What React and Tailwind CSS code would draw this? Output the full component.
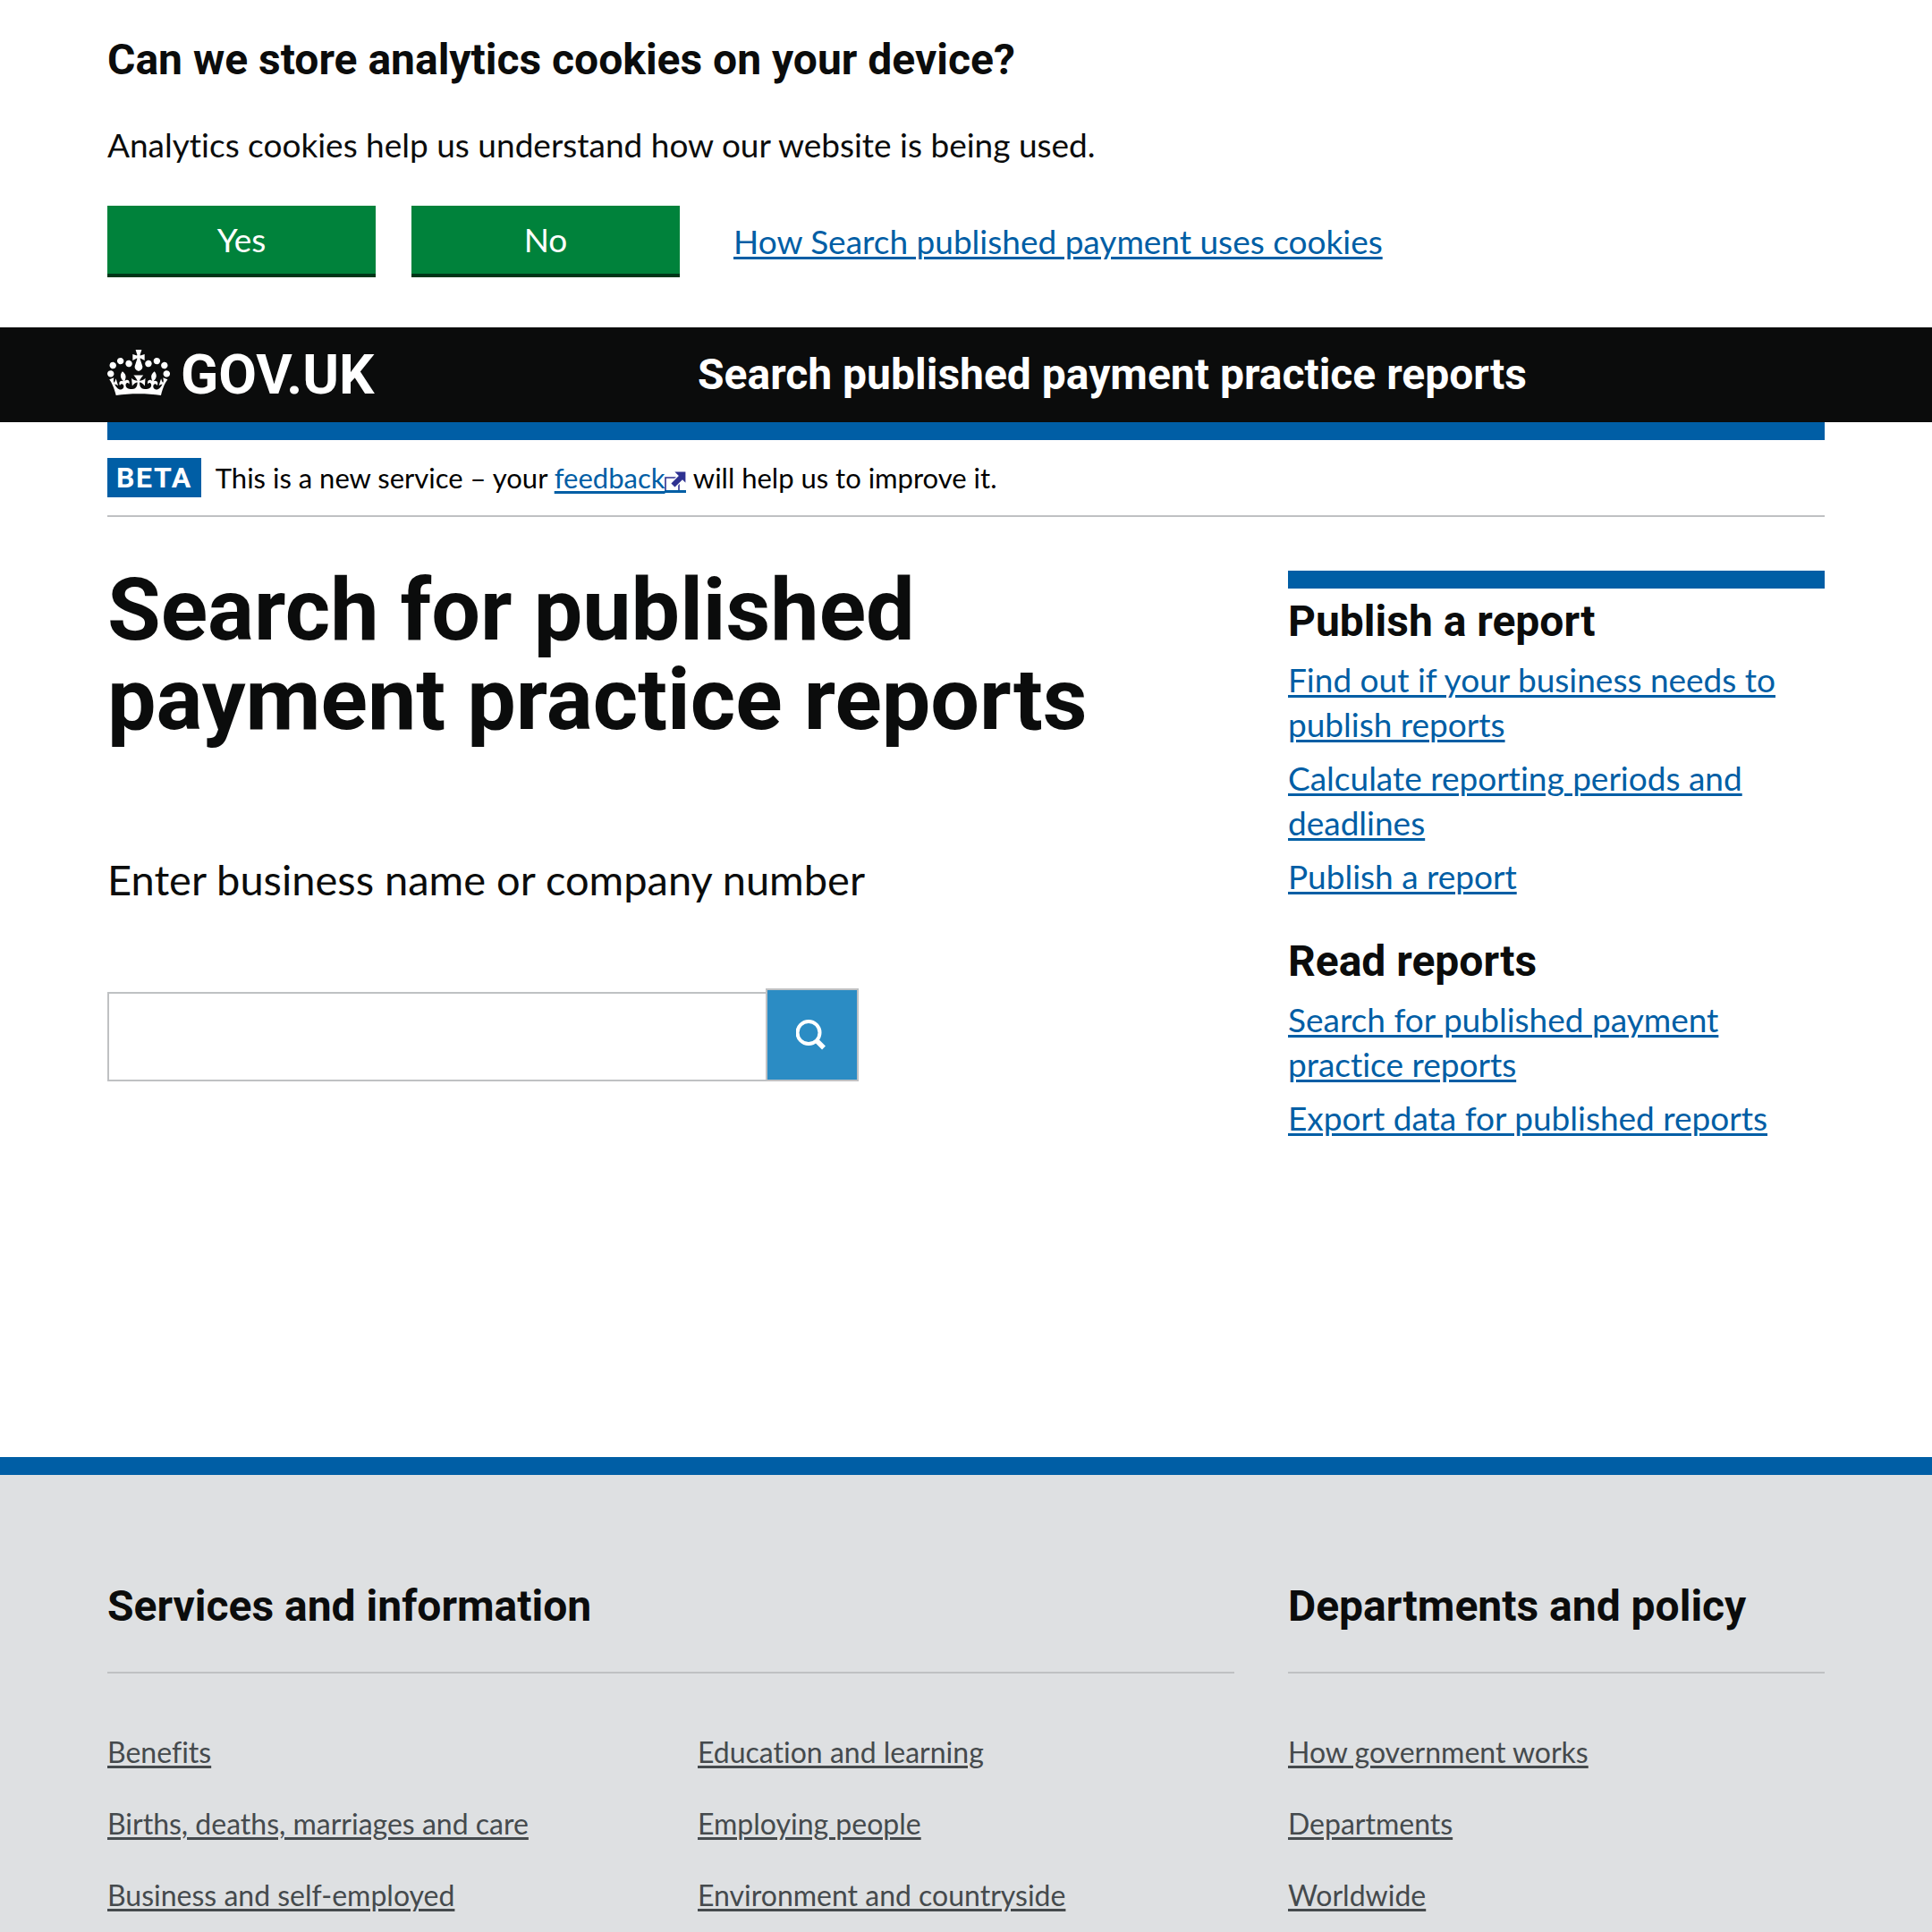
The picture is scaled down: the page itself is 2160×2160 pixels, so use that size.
import React from "react";

const publishLinks = [
  "Find out if your business needs to publish reports",
  "Calculate reporting periods and deadlines",
  "Publish a report",
];
const readLinks = [
  "Search for published payment practice reports",
  "Export data for published reports",
];
const serviceLinks = [
  ["Benefits", "Births, deaths, marriages and care", "Business and self-employed"],
  ["Education and learning", "Employing people", "Environment and countryside"],
];
const policyLinks = ["How government works", "Departments", "Worldwide"];

function Crown() {
  return (
    <svg className="mb-1 w-[70px] shrink-0" viewBox="0 0 132 97" fill="currentColor" aria-hidden="true">
      <path d="M25 30.2c3.5 1.5 7.7-.2 9.1-3.7 1.5-3.6-.2-7.8-3.9-9.2-3.6-1.4-7.6.3-9.1 3.9-1.4 3.5.3 7.5 3.9 9zM9 39.5c3.6 1.5 7.8-.2 9.2-3.7 1.5-3.6-.2-7.8-3.9-9.1-3.6-1.5-7.6.2-9.1 3.8-1.4 3.5.3 7.5 3.8 9zM4.4 57.2c3.5 1.5 7.7-.2 9.1-3.8 1.5-3.6-.2-7.7-3.9-9.1-3.5-1.5-7.6.3-9.1 3.8-1.4 3.5.3 7.6 3.9 9.1zm38.3-21.4c3.5 1.5 7.7-.2 9.1-3.8 1.5-3.6-.2-7.7-3.9-9.1-3.6-1.5-7.6.3-9.1 3.8-1.3 3.6.4 7.7 3.9 9.1zm64.4-5.6c-3.6 1.5-7.8-.2-9.1-3.7-1.5-3.6.2-7.8 3.8-9.2 3.6-1.4 7.7.3 9.2 3.9 1.3 3.5-.4 7.5-3.9 9zm15.9 9.3c-3.6 1.5-7.7-.2-9.1-3.7-1.5-3.6.2-7.8 3.7-9.1 3.6-1.5 7.7.2 9.2 3.8 1.5 3.5-.3 7.5-3.8 9zm4.7 17.7c-3.6 1.5-7.8-.2-9.2-3.8-1.5-3.6.2-7.7 3.9-9.1 3.6-1.5 7.7.3 9.2 3.8 1.3 3.5-.4 7.6-3.9 9.1zM89.3 35.8c-3.6 1.5-7.8-.2-9.2-3.8-1.4-3.6.2-7.7 3.9-9.1 3.6-1.5 7.7.3 9.2 3.8 1.4 3.6-.3 7.7-3.9 9.1zM69.7 17.7l8.9 4.7V9.3l-8.9 2.8c-.2-.3-.5-.6-.9-.9L72.4 0H59.6l3.5 11.2c-.3.3-.6.5-.9.9l-8.8-2.8v13.1l8.8-4.7c.3.3.6.7.9.9l-5 15.4v.1c-.2.8-.4 1.6-.4 2.4 0 4.1 3.1 7.5 7 8.1h.2c.3 0 .7.1 1 .1.4 0 .7 0 1-.1h.2c4-.6 7.1-4.1 7.1-8.1 0-.8-.1-1.7-.4-2.4V34l-5.1-15.4c.4-.2.7-.6 1-.9zM66 92.8c16.9 0 32.8 1.1 47.1 3.2 4-16.9 8.9-26.7 14-33.5l-9.6-3.4c1 4.9 1.1 7.2 0 10.2-1.5-1.4-3-4.3-4.2-8.7L108.6 76c2.8-2 5-3.2 7.5-3.3-4.4 9.4-10 11.9-13.6 11.2-4.3-.8-6.3-4.6-5.6-7.9 1-4.7 5.7-5.9 8-.5 4.3-8.7-3-11.4-7.6-8.8 7.1-7.2 7.9-13.5 2.1-21.1-8 6.1-8.1 12.3-4.5 20.8-4.7-5.4-12.1-2.5-9.5 6.2 3.4-5.2 7.9-2 7.2 3.1-.6 4.3-6.4 7.8-13.5 7.2-10.3-.9-10.9-8-11.2-13.8 2.5-.5 7.1 1.8 11 7.3L80.2 60c-4.1 4.4-8 5.3-12.3 5.4 1.4-4.4 8-11.6 8-11.6H55.5s6.4 7.2 7.9 11.6c-4.2-.1-8-1-12.3-5.4l1.4 16.4c3.9-5.5 8.5-7.7 10.9-7.3-.3 5.8-.9 12.8-11.1 13.8-7.2.6-12.9-2.9-13.5-7.2-.7-5 3.8-8.3 7.1-3.1 2.7-8.7-4.6-11.6-9.4-6.2 3.7-8.5 3.6-14.7-4.6-20.8-5.8 7.6-5 13.9 2.2 21.1-4.7-2.6-11.9.1-7.7 8.8 2.3-5.5 7.1-4.2 8.1.5.7 3.3-1.3 7.1-5.7 7.9-3.5.7-9-1.8-13.5-11.2 2.5.1 4.7 1.3 7.5 3.3l-4.7-15.4c-1.2 4.4-2.7 7.2-4.3 8.7-1.1-3-.9-5.3 0-10.2l-9.5 3.4c5 6.9 9.9 16.7 14 33.5 14.8-2.1 30.8-3.2 47.7-3.2z" />
    </svg>
  );
}

function ExternalIcon() {
  return (
    <svg
      className="inline-block h-6 w-6 border-b-3 border-[#005ea5] align-[-5px]"
      viewBox="2 0 24 21"
      aria-hidden="true"
    >
      <path d="M3 21V7h15v14" fill="none" stroke="#2e3191" strokeWidth="1.6" />
      <path d="M12 0h14v14l-4-4-8.5 8.5-5-5L17 5z" fill="#2e3191" stroke="#fff" strokeWidth="1.2" />
    </svg>
  );
}

function SideSection({ title, links }) {
  return (
    <section>
      <h2 className="font-[Roboto,sans-serif] text-[48px] leading-[60px] font-bold">{title}</h2>
      <ul className="mt-2.5 flex flex-col gap-2.5">
        {links.map((text) => (
          <li key={text}>
            <a href="#" className="text-[#005ea5] underline decoration-3 underline-offset-3">
              {text}
            </a>
          </li>
        ))}
      </ul>
    </section>
  );
}

function FooterList({ links }) {
  return (
    <ul className="flex flex-1 flex-col gap-10">
      {links.map((text) => (
        <li key={text}>
          <a href="#" className="underline decoration-3 underline-offset-3">
            {text}
          </a>
        </li>
      ))}
    </ul>
  );
}

function FooterHeading({ children }) {
  return (
    <h2 className="border-b-2 border-[#bfc1c3] pb-[43px] font-[Roboto,sans-serif] text-[48px] leading-[60px] font-bold text-[#0b0c0c]">
      {children}
    </h2>
  );
}

export default function App() {
  return (
    <div className="flex min-h-screen flex-col bg-white font-[Lato,sans-serif] text-[37px] leading-[50px] text-[#0b0c0c] [font-variant-ligatures:none]">
      <section className="px-[120px] pt-[37px] pb-14" aria-label="Cookies">
        <h2 className="font-[Roboto,sans-serif] text-[48px] leading-[60px] font-bold">
          Can we store analytics cookies on your device?
        </h2>
        <p className="mt-10">Analytics cookies help us understand how our website is being used.</p>
        <div className="mt-[43px] flex items-center gap-10">
          <button type="button" className="h-20 w-[300px] border-b-4 border-[#003618] bg-[#00823b] text-white">
            Yes
          </button>
          <button type="button" className="h-20 w-[300px] border-b-4 border-[#003618] bg-[#00823b] text-white">
            No
          </button>
          <a href="#" className="ml-5 text-[#005ea5] underline decoration-3 underline-offset-3">
            How Search published payment uses cookies
          </a>
        </div>
      </section>

      <header>
        <div className="grid grid-cols-3 items-center gap-x-[60px] bg-[#0b0c0c] px-[120px] py-5 text-white">
          <a href="#" className="flex items-center gap-3 font-[Roboto,sans-serif] text-[62px] leading-[66px] font-bold">
            <Crown />
            <span>GOV.UK</span>
          </a>
          <a href="#" className="col-span-2 font-[Roboto,sans-serif] text-[48px] leading-[60px] font-bold">
            Search published payment practice reports
          </a>
        </div>
        <div className="mx-[120px] h-5 bg-[#005ea5]" />
      </header>

      <div className="mx-[120px] flex items-center gap-4 border-b-2 border-[#bfc1c3] py-5 text-[31px] leading-[44px]">
        <strong className="bg-[#005ea5] px-2.5 font-[Roboto,sans-serif] text-[32px] font-bold tracking-wider text-white">
          BETA
        </strong>
        <span className="text-black">
          This is a new service – your{" "}
          <a href="#" className="text-[#005ea5] underline decoration-3 underline-offset-3">
            feedback
            <ExternalIcon />
          </a>{" "}
          will help us to improve it.
        </span>
      </div>

      <main className="grid grid-cols-3 gap-x-[60px] px-[120px] pb-[354px]">
        <div className="col-span-2 pt-[54px]">
          <h1 className="max-w-[1160px] font-[Roboto,sans-serif] text-[97px] leading-[100px] font-bold">
            Search for published payment practice reports
          </h1>
          <form onSubmit={(e) => e.preventDefault()}>
            <label htmlFor="query" className="mt-[121px] block text-[47px] leading-[60px]">
              Enter business name or company number
            </label>
            <div className="mt-[92px] flex items-end">
              <input
                id="query"
                type="text"
                className="h-[100px] w-[736px] border-2 border-r-0 border-[#bfc1c3] px-4"
              />
              <button
                type="submit"
                aria-label="Search"
                className="flex size-[104px] items-center justify-center border-2 border-[#bfc1c3] bg-[#2b8cc4] text-white"
              >
                <svg className="size-9" viewBox="0 0 36 36" fill="none" stroke="currentColor" aria-hidden="true">
                  <circle cx="14" cy="15.5" r="12.5" strokeWidth="4" />
                  <path d="M22.5 24l8.5 8.5" strokeWidth="5.5" />
                </svg>
              </button>
            </div>
          </form>
        </div>
        <aside className="mt-[60px] flex flex-col gap-10 border-t-20 border-[#005ea5] pt-[7px]">
          <SideSection title="Publish a report" links={publishLinks} />
          <SideSection title="Read reports" links={readLinks} />
        </aside>
      </main>

      <footer className="grid flex-1 grid-cols-3 content-start gap-x-[60px] border-t-20 border-[#005ea5] bg-[#dee0e2] px-[120px] pt-[117px] text-[32px] leading-[40px] text-[#454a4d]">
        <section className="col-span-2">
          <FooterHeading>Services and information</FooterHeading>
          <div className="flex gap-[60px] pt-[68px]">
            <FooterList links={serviceLinks[0]} />
            <FooterList links={serviceLinks[1]} />
          </div>
        </section>
        <section>
          <FooterHeading>Departments and policy</FooterHeading>
          <div className="flex pt-[68px]">
            <FooterList links={policyLinks} />
          </div>
        </section>
      </footer>
    </div>
  );
}
